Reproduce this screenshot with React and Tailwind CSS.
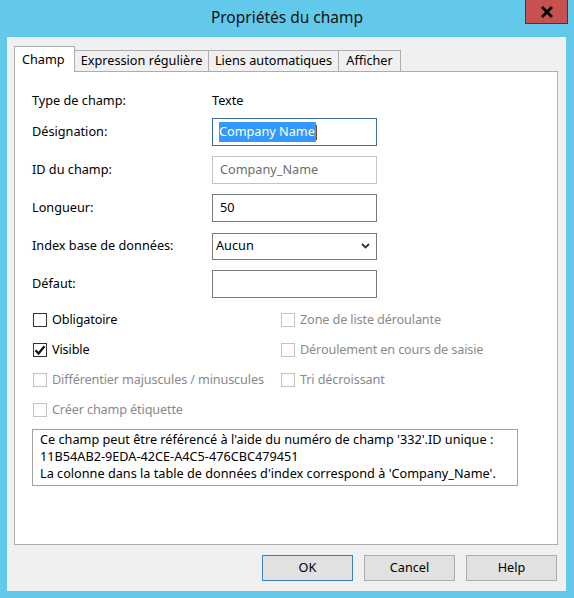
import React from "react";

const FONT = "font-['Segoe_UI','Noto_Sans','Open_Sans',sans-serif]";

const CHECKS = [
  [
    { label: "Obligatoire", checked: false, disabled: false },
    { label: "Zone de liste déroulante", checked: false, disabled: true },
  ],
  [
    { label: "Visible", checked: true, disabled: false },
    { label: "Déroulement en cours de saisie", checked: false, disabled: true },
  ],
  [
    { label: "Différentier majuscules / minuscules", checked: false, disabled: true },
    { label: "Tri décroissant", checked: false, disabled: true },
  ],
  [{ label: "Créer champ étiquette", checked: false, disabled: true }, null],
];

const Check = ({ item }) => {
  if (!item) return <div />;
  return (
    <div className="flex items-center gap-[5px] h-[30px]">
      <span
        className={`w-[14px] h-[14px] ml-[1px] border bg-white flex items-center justify-center shrink-0 ${
          item.disabled ? "border-[#c4c4c4]" : "border-[#333333]"
        }`}
      >
        {item.checked && (
          <svg width="12" height="12" viewBox="0 0 12 12">
            <path d="M1.5 6.2 L4.5 9.5 L10.5 2.2" fill="none" stroke="#111" strokeWidth="2.2" />
          </svg>
        )}
      </span>
      <span className={`whitespace-nowrap tracking-[-0.15px] ${item.disabled ? "text-[#8a8a8a]" : "text-black"}`}>
        {item.label}
      </span>
    </div>
  );
};

const Row = ({ label, children }) => (
  <div className="flex items-center h-[28px]">
    <span className="w-[180px] shrink-0">{label}</span>
    {children}
  </div>
);

const Button = ({ children, primary }) => (
  <button
    className={`w-[91px] h-[26px] bg-[#e1e1e1] border text-black ${
      primary ? "border-[#3c7fb1]" : "border-[#adadad]"
    }`}
  >
    {children}
  </button>
);

export default function App() {
  return (
    <div className={`w-[574px] h-[598px] bg-[#62c9ea] flex flex-col text-[12.7px] text-black ${FONT}`}>
      {/* Title bar */}
      <div className="relative h-[37px] flex items-center justify-center">
        <span className="text-[15.5px] text-[#111] -mt-[1px]">Propriétés du champ</span>
        <div className="absolute right-[6px] top-0 w-[43px] h-[24px] bg-[#c75050] border border-[#5e2a2a] border-t-0 flex items-center justify-center">
          <svg width="14" height="12" viewBox="0 0 14 12">
            <path d="M2 1 L12 11 M12 1 L2 11" stroke="#000" strokeWidth="2.8" />
          </svg>
        </div>
      </div>

      {/* Client area */}
      <div className="ml-[7px] mr-[8px] mb-[7px] flex-1 bg-[#f0f0f0] pl-[7px] pr-[8px] pt-[9px] flex flex-col">
        {/* Tabs */}
        <div className="flex items-end h-[25px] relative z-10">
          <div className="h-[26px] -mb-px px-[7px] w-[61px] bg-white border border-b-0 border-[#adadad] flex items-center">
            Champ
          </div>
          <div className="h-[21px] w-[134px] bg-[#f0f0f0] border border-l-0 border-b-0 border-[#adadad] flex items-center justify-center">
            Expression régulière
          </div>
          <div className="h-[21px] w-[130px] bg-[#f0f0f0] border border-l-0 border-b-0 border-[#adadad] flex items-center justify-center">
            Liens automatiques
          </div>
          <div className="h-[21px] w-[62px] bg-[#f0f0f0] border border-l-0 border-b-0 border-[#adadad] flex items-center justify-center">
            Afficher
          </div>
        </div>

        {/* Panel */}
        <div className="h-[474px] bg-white border border-[#adadad] pl-[17px] pt-[19px]">
          <div className="flex items-center h-[20px]">
            <span className="w-[180px]">Type de champ:</span>
            <span>Texte</span>
          </div>

          <div className="flex flex-col gap-[10px] mt-[7px]">
            <Row label="Désignation:">
              <div className="w-[165px] h-[28px] border border-[#3c6ea3] flex items-center pl-[6px]">
                <span className="bg-[#3399ff] text-white pr-[1px]">Company Name</span>
                <span className="w-px h-[15px] bg-[#7a4a1a]" />
              </div>
            </Row>
            <Row label="ID du champ:">
              <div className="w-[165px] h-[28px] border border-[#c4c4c4] flex items-center pl-[7px] text-[#6d6d6d]">
                Company_Name
              </div>
            </Row>
            <Row label="Longueur:">
              <div className="w-[165px] h-[28px] border border-[#7a7a7a] flex items-center pl-[7px]">50</div>
            </Row>
            <Row label="Index base de données:">
              <div className="w-[165px] h-[27px] border border-[#7a7a7a] flex items-center justify-between pl-[3px] pr-[6px]">
                <span>Aucun</span>
                <svg width="9" height="6" viewBox="0 0 9 6">
                  <path d="M1 1 L4.5 4.5 L8 1" fill="none" stroke="#333" strokeWidth="1.8" />
                </svg>
              </div>
            </Row>
            <Row label="Défaut:">
              <div className="w-[165px] h-[28px] border border-[#7a7a7a]" />
            </Row>
          </div>

          <div className="grid grid-cols-[248px_1fr] mt-[7px]">
            {CHECKS.map((row, i) => (
              <React.Fragment key={i}>
                <Check item={row[0]} />
                <Check item={row[1]} />
              </React.Fragment>
            ))}
          </div>

          <div className="w-[486px] h-[57px] mt-[4px] border border-[#a0a0a0] px-[7px] pt-px leading-[17px]">
            <div>Ce champ peut être référencé à l'aide du numéro de champ '332'.ID unique :</div>
            <div>11B54AB2-9EDA-42CE-A4C5-476CBC479451</div>
            <div>La colonne dans la table de données d'index correspond à 'Company_Name'.</div>
          </div>
        </div>

        {/* Buttons */}
        <div className="flex justify-end gap-[11px] mt-[10px] pr-px">
          <Button primary>OK</Button>
          <Button>Cancel</Button>
          <Button>Help</Button>
        </div>
      </div>
    </div>
  );
}
